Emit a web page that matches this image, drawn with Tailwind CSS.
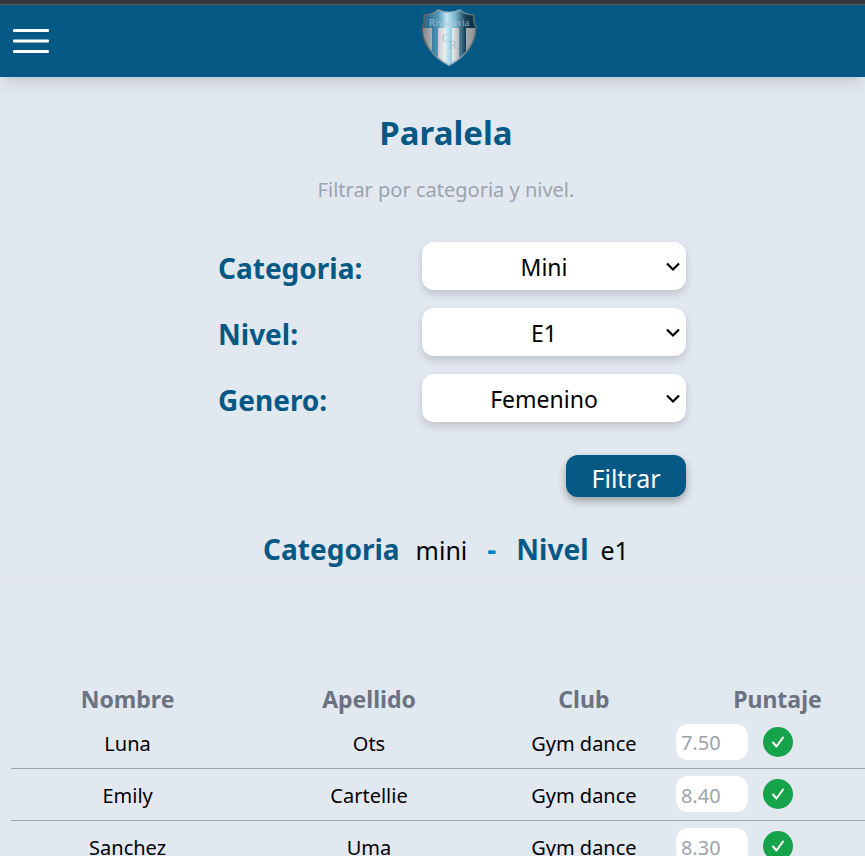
<!DOCTYPE html>
<html lang="es">
<head>
<meta charset="utf-8">
<meta name="viewport" content="width=device-width, initial-scale=1">
<title>Paralela</title>
<script src="https://cdn.jsdelivr.net/npm/@tailwindcss/browser@4"></script>
</head>
<body class="bg-[#e2e8f0] font-['Noto_Sans',sans-serif] text-black overflow-x-hidden">
<div class="h-[5px] bg-[#35363a] border-b border-[#5a5c60]"></div>
<header class="relative z-10 flex h-[72px] items-center bg-[#075985] pl-[13px] shadow-lg">
  <button type="button" aria-label="Menu" class="w-9">
    <svg class="block w-9 h-6" viewBox="0 0 36 24" fill="#fff"><rect width="36" height="3" rx="1"/><rect y="10.500" width="36" height="3" rx="1"/><rect y="21" width="36" height="3" rx="1"/></svg>
  </button>
  <a href="#" aria-label="Rivadavia" class="mx-auto -translate-x-2 -mt-2">
    <svg class="block w-14 h-[58px]" viewBox="0 0 56 58">
      <defs>
        <linearGradient id="m" x1="0" x2="1" y1="0" y2="0"><stop offset="0" stop-color="#4a5a62"/><stop offset=".12" stop-color="#2f6f92"/><stop offset=".3" stop-color="#4f93b6"/><stop offset=".46" stop-color="#c4e8f5"/><stop offset=".62" stop-color="#78b4cc"/><stop offset=".8" stop-color="#123c52"/><stop offset="1" stop-color="#0c2c3e"/></linearGradient>
        <linearGradient id="s" gradientUnits="userSpaceOnUse" x1="2" x2="54" y1="0" y2="0"><stop offset="0" stop-color="#85898c"/><stop offset=".3" stop-color="#c9cdd0"/><stop offset=".5" stop-color="#fff"/><stop offset=".7" stop-color="#b4b8ba"/><stop offset="1" stop-color="#8d9396"/></linearGradient>
        <linearGradient id="r" x1="0" x2="1" y1="0" y2="0"><stop offset="0" stop-color="#55585a"/><stop offset=".5" stop-color="#9fc4d2"/><stop offset="1" stop-color="#55676f"/></linearGradient>
        <clipPath id="c"><path d="M3 7Q12 7 17 2Q22 4.500 28 4.500Q34 4.500 39 2Q45 7 53 7Q52 14 55 19Q55 30 49 39Q41 51 28 57Q15 51 7 39Q1 30 1 19Q4 14 3 7Z"/></clipPath>
      </defs>
      <g clip-path="url(#c)"><rect width="56" height="58" fill="url(#m)"/><path fill="url(#s)" d="M0 20h11v38H0zM17 20h8v38h-8zM31 20h7v38h-7zM45 20h11v38H45z"/></g>
      <path fill="none" stroke="url(#r)" stroke-width="1.500" d="M3 7Q12 7 17 2Q22 4.500 28 4.500Q34 4.500 39 2Q45 7 53 7Q52 14 55 19Q55 30 49 39Q41 51 28 57Q15 51 7 39Q1 30 1 19Q4 14 3 7Z"/>
      <g font-family="Liberation Serif, serif" text-anchor="middle" fill="#b8d0dc" fill-opacity=".75"><text x="28" y="18" font-size="10">Rivadavia</text><text x="25" y="34" font-size="12" fill="#8fb4c8">C</text><text x="32" y="41" font-size="12" fill="#8fb4c8">R</text></g>
    </svg>
  </a>
</header>
<main>
  <section class="flex flex-col items-center pl-[27px] pt-8">
    <h1 class="text-[33px] leading-[48px] font-bold text-[#075985]">Paralela</h1>
    <p class="mt-[17px] text-xl leading-8 text-[#9ca3af]">Filtrar por categoria y nivel.</p>
    <form class="mt-9 flex w-full max-w-[480px] flex-col gap-[18px] pl-3">
      <div class="flex items-center justify-between">
        <label for="cat" class="pt-1 text-[28px] leading-10 font-bold text-[#075985]">Categoria:</label>
        <div class="relative"><select id="cat" class="h-12 w-[264px] appearance-none rounded-xl bg-white pt-[3px] pr-5 text-[23px] [text-align-last:center] shadow-[0_4px_8px_rgb(0_0_0/0.16)]"><option>Mini</option></select><svg class="pointer-events-none absolute right-[6px] top-[19px] h-3 w-[14px]" viewBox="0 0 14 12" fill="none" stroke="#000" stroke-width="2.200"><path d="M1 2.500l6 6 6-6"/></svg></div>
      </div>
      <div class="flex items-center justify-between">
        <label for="niv" class="pt-1 text-[28px] leading-10 font-bold text-[#075985]">Nivel:</label>
        <div class="relative"><select id="niv" class="h-12 w-[264px] appearance-none rounded-xl bg-white pt-[3px] pr-5 text-[23px] [text-align-last:center] shadow-[0_4px_8px_rgb(0_0_0/0.16)]"><option>E1</option></select><svg class="pointer-events-none absolute right-[6px] top-[19px] h-3 w-[14px]" viewBox="0 0 14 12" fill="none" stroke="#000" stroke-width="2.200"><path d="M1 2.500l6 6 6-6"/></svg></div>
      </div>
      <div class="flex items-center justify-between">
        <label for="gen" class="pt-1 text-[28px] leading-10 font-bold text-[#075985]">Genero:</label>
        <div class="relative"><select id="gen" class="h-12 w-[264px] appearance-none rounded-xl bg-white pt-[3px] pr-5 text-[23px] [text-align-last:center] shadow-[0_4px_8px_rgb(0_0_0/0.16)]"><option>Femenino</option></select><svg class="pointer-events-none absolute right-[6px] top-[19px] h-3 w-[14px]" viewBox="0 0 14 12" fill="none" stroke="#000" stroke-width="2.200"><path d="M1 2.500l6 6 6-6"/></svg></div>
      </div>
      <button type="button" class="mt-[15px] h-[42px] w-[120px] self-end rounded-xl bg-[#075985] pt-[3px] text-[25px] leading-9 text-white shadow-[0_4px_8px_rgb(0_0_0/0.32)]">Filtrar</button>
    </form>
    <h2 class="mt-8 flex items-baseline text-[28px] leading-10 font-bold text-[#075985]">Categoria<span class="ml-4 text-[25px] font-normal text-black">mini</span><span class="mx-5 text-[#0284c7]">-</span>Nivel<span class="ml-3 text-[25px] font-normal text-black">e1</span></h2>
  </section>
  <hr class="mt-3 border-[#e5e7eb]">
  <div class="overflow-hidden pl-[11px] pt-[99px]">
    <table class="w-[calc(100%+16px)] table-fixed text-center text-xl">
      <thead class="text-[23px] text-[#6b7280]"><tr class="h-[34px]"><th class="w-[26.8%]">Nombre</th><th class="w-[28.7%]">Apellido</th><th class="w-[20.7%]">Club</th><th>Puntaje</th></tr></thead>
      <tbody>
        <tr class="h-[52px] border-b border-[#9ca3af]"><td class="pt-1">Luna</td><td class="pt-1">Ots</td><td class="pt-1">Gym dance</td><td><div class="flex items-center gap-[15px] pl-[2px]"><input aria-label="Puntaje de Luna Ots" placeholder="7.50" class="h-9 w-[72px] rounded-xl bg-white px-[5px] pt-[2px] placeholder:text-[#9ca3af]"><button type="button" aria-label="Guardar"><svg class="block size-[30px]" viewBox="0 0 30 30"><circle cx="15" cy="15" r="15" fill="#16a34a"/><path d="M10 15.500l3.500 4 6.500-9" fill="none" stroke="#fff" stroke-width="2" stroke-linecap="round" stroke-linejoin="round"/></svg></button></div></td></tr>
        <tr class="h-[52px] border-b border-[#9ca3af]"><td class="pt-1">Emily</td><td class="pt-1">Cartellie</td><td class="pt-1">Gym dance</td><td><div class="flex items-center gap-[15px] pl-[2px]"><input aria-label="Puntaje de Emily Cartellie" placeholder="8.40" class="h-9 w-[72px] rounded-xl bg-white px-[5px] pt-[2px] placeholder:text-[#9ca3af]"><button type="button" aria-label="Guardar"><svg class="block size-[30px]" viewBox="0 0 30 30"><circle cx="15" cy="15" r="15" fill="#16a34a"/><path d="M10 15.500l3.500 4 6.500-9" fill="none" stroke="#fff" stroke-width="2" stroke-linecap="round" stroke-linejoin="round"/></svg></button></div></td></tr>
        <tr class="h-[52px] border-b border-[#9ca3af]"><td class="pt-1">Sanchez</td><td class="pt-1">Uma</td><td class="pt-1">Gym dance</td><td><div class="flex items-center gap-[15px] pl-[2px]"><input aria-label="Puntaje de Sanchez Uma" placeholder="8.30" class="h-9 w-[72px] rounded-xl bg-white px-[5px] pt-[2px] placeholder:text-[#9ca3af]"><button type="button" aria-label="Guardar"><svg class="block size-[30px]" viewBox="0 0 30 30"><circle cx="15" cy="15" r="15" fill="#16a34a"/><path d="M10 15.500l3.500 4 6.500-9" fill="none" stroke="#fff" stroke-width="2" stroke-linecap="round" stroke-linejoin="round"/></svg></button></div></td></tr>
      </tbody>
    </table>
  </div>
</main>
</body>
</html>
